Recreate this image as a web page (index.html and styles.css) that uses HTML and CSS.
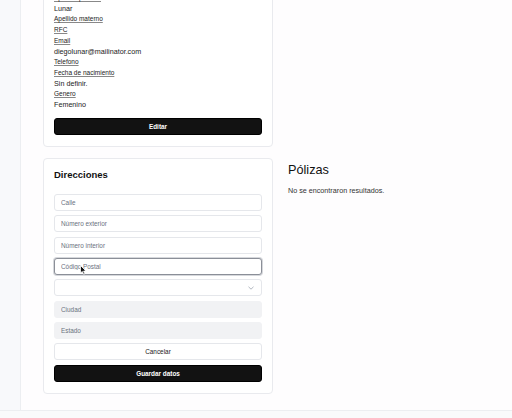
FILE: index.html
```html
<!DOCTYPE html>
<html lang="es">

<head>
    <meta charset="UTF-8">
    <title>Cliente</title>
    <link rel="stylesheet" href="styles.css">
</head>

<body>
    <div class="layout">
        <aside class="sidebar"></aside>
        <div class="main">
            <div class="content">
                <section class="card card-profile">
                    <span class="label">Apellido paterno</span>
                    <span class="value">Lunar</span>
                    <span class="label">Apellido materno</span>
                    <span class="label">RFC</span>
                    <span class="label">Email</span>
                    <span class="value">diegolunar@mailinator.com</span>
                    <span class="label">Telefono</span>
                    <span class="label">Fecha de nacimiento</span>
                    <span class="value">Sin definir.</span>
                    <span class="label">Genero</span>
                    <span class="value">Femenino</span>
                    <button class="btn btn-dark btn-edit">Editar</button>
                </section>

                <section class="card card-address">
                    <h2 class="card-title">Direcciones</h2>
                    <form class="form">
                        <input class="field" type="text" placeholder="Calle">
                        <input class="field" type="text" placeholder="Número exterior">
                        <input class="field" type="text" placeholder="Número interior">
                        <div class="field-wrap">
                            <input class="field field-focus" type="text" placeholder="Código Postal">
                            <svg class="cursor" width="7" height="10" viewBox="0 0 7 10">
                                <path d="M0.5 0.5 L0.5 8 L2.3 6.4 L3.6 9.3 L4.8 8.8 L3.6 6 L6 6 Z" fill="#111" stroke="#fff" stroke-width="0.8" />
                            </svg>
                        </div>
                        <div class="field field-select">
                            <svg width="6" height="4" viewBox="0 0 6 4">
                                <path d="M0.5 0.8 L3 3.2 L5.5 0.8" fill="none" stroke="#9ca3af" stroke-width="0.8" />
                            </svg>
                        </div>
                        <input class="field field-disabled" type="text" placeholder="Ciudad" disabled>
                        <input class="field field-disabled" type="text" placeholder="Estado" disabled>
                        <button type="button" class="btn btn-light">Cancelar</button>
                        <button type="button" class="btn btn-dark">Guardar datos</button>
                    </form>
                </section>

                <section class="policies">
                    <h2 class="policies-title">Pólizas</h2>
                    <p class="policies-empty">No se encontraron resultados.</p>
                </section>
            </div>
        </div>
    </div>
</body>

</html>
```

FILE: styles.css
```css
* {
    padding: 0;
    margin: 0;
    box-sizing: border-box;
}

body {
    background-color: #f9fafb;
    font-family: "Liberation Sans", Arial, sans-serif;
    color: #111;
    height: 418px;
    overflow: hidden;
}

.layout {
    display: flex;
    height: 411px;
    border-bottom: 1px solid #eceef1;
}

.sidebar {
    width: 21px;
    background-color: #f8f9fb;
    border-right: 1px solid #eceef1;
}

.main {
    flex: 1;
    background-color: #fefdfe;
    overflow: hidden;
}

.content {
    display: grid;
    grid-template-columns: 230px 1fr;
    column-gap: 15px;
    row-gap: 11px;
    padding-left: 22px;
    /* la vista está desplazada: la primera tarjeta empieza arriba */
    margin-top: -19px;
}

.card {
    background-color: #fff;
    border: 1px solid #e9eaee;
    border-radius: 4px;
    padding: 11px 10px;
}

.card-profile {
    grid-column: 1;
    grid-row: 1;
    display: flex;
    flex-direction: column;
    align-items: flex-start;
}

.label {
    font-size: 6.5px;
    line-height: 10.7px;
    text-decoration: underline;
    text-decoration-color: #888;
    color: #222;
}

.value {
    font-size: 7.2px;
    line-height: 10.7px;
    color: #1a1a1a;
}

.btn {
    display: block;
    width: 100%;
    height: 17px;
    border-radius: 3px;
    font-family: "Liberation Sans", Arial, sans-serif;
    font-size: 6.4px;
    cursor: pointer;
}

.btn-dark {
    background-color: #121212;
    border: 1px solid #000;
    color: #fff;
    font-weight: bold;
}

.btn-light {
    background-color: #fff;
    border: 1px solid #e5e7eb;
    color: #222;
}

.btn-edit {
    margin-top: 7px;
}

.card-address {
    grid-column: 1;
    grid-row: 2;
}

.card-title {
    font-size: 9.5px;
    font-weight: bold;
    line-height: 11px;
    margin-top: -1px;
    margin-bottom: 14px;
}

.form {
    display: flex;
    flex-direction: column;
    gap: 4.4px;
}

.field {
    display: block;
    width: 100%;
    height: 17px;
    border: 1px solid #e5e7eb;
    border-radius: 3px;
    background-color: #fff;
    padding: 0 6px;
    font-family: "Liberation Sans", Arial, sans-serif;
    font-size: 6.4px;
    color: #222;
    outline: none;
}

.field::placeholder {
    color: #6b7280;
}

.field-wrap {
    position: relative;
}

.field-focus {
    border-color: #8b8f98;
    box-shadow: 0 0 0 1px #d6d8dc;
}

.cursor {
    position: absolute;
    left: 26px;
    top: 7px;
}

.field-select {
    display: flex;
    align-items: center;
    justify-content: flex-end;
    padding-right: 7px;
}

.field-disabled {
    background-color: #f1f2f4;
    border-color: #f1f2f4;
}

.policies {
    grid-column: 2;
    grid-row: 2;
    padding-top: 5px;
}

.policies-title {
    font-size: 12.7px;
    font-weight: normal;
    line-height: 15px;
    color: #111;
}

.policies-empty {
    margin-top: 8px;
    font-size: 7.2px;
    color: #333;
}
```
